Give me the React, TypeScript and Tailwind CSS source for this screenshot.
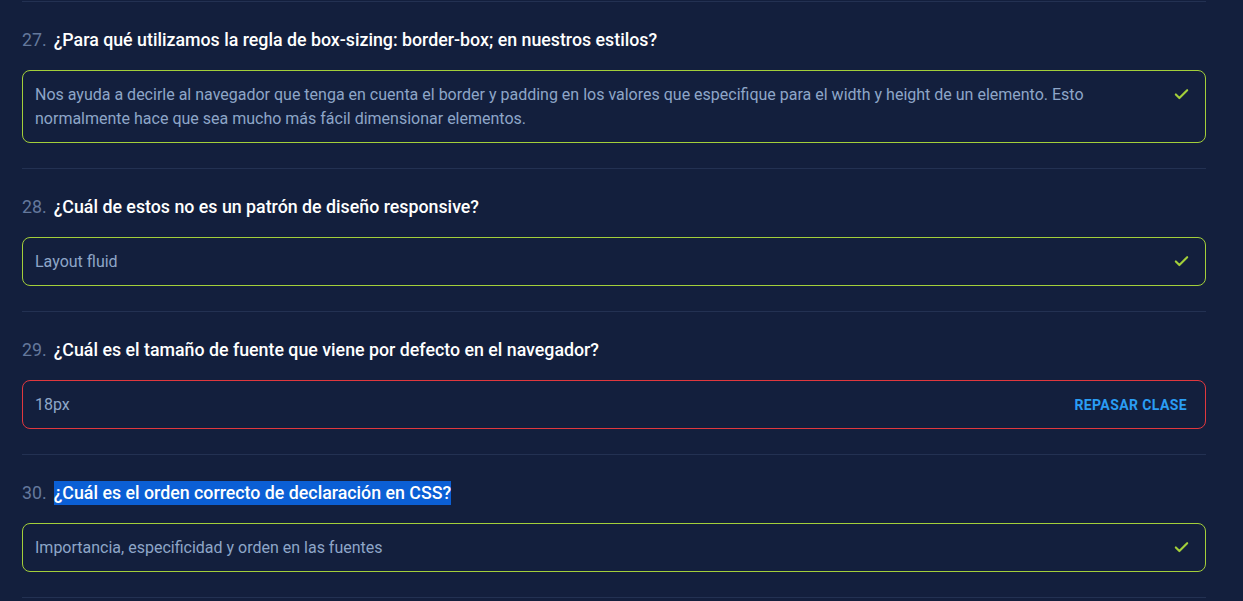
import { Check } from "lucide-react";

type Item = {
  n: number;
  q: string;
  a: string;
  ok: boolean;
  selected?: boolean;
};

const items: Item[] = [
  {
    n: 27,
    q: "¿Para qué utilizamos la regla de box-sizing: border-box; en nuestros estilos?",
    a: "Nos ayuda a decirle al navegador que tenga en cuenta el border y padding en los valores que especifique para el width y height de un elemento. Esto normalmente hace que sea mucho más fácil dimensionar elementos.",
    ok: true,
  },
  {
    n: 28,
    q: "¿Cuál de estos no es un patrón de diseño responsive?",
    a: "Layout fluid",
    ok: true,
  },
  {
    n: 29,
    q: "¿Cuál es el tamaño de fuente que viene por defecto en el navegador?",
    a: "18px",
    ok: false,
  },
  {
    n: 30,
    q: "¿Cuál es el orden correcto de declaración en CSS?",
    a: "Importancia, especificidad y orden en las fuentes",
    ok: true,
    selected: true,
  },
];

const App = () => {
  return (
    <div className="min-h-[601px] bg-[#131f3d] pt-px font-['Roboto',sans-serif]">
      <div className="w-[1184px] ml-[22px]">
        {items.map((item) => (
          <div key={item.n} className="border-t border-[#233152] pt-[26px] pb-[25px]">
            <div className="flex items-center h-6 text-[17.8px] leading-6">
              <span className="text-[#64789c] mr-[7px]">{item.n}.</span>
              <span
                className={
                  item.selected
                    ? "font-medium text-white bg-[#0b5fd5]"
                    : "font-medium text-white"
                }
              >
                {item.q}
              </span>
            </div>
            <div
              className={
                item.ok
                  ? "mt-[18px] flex items-start justify-between rounded-lg border border-[#a3cf3a] pl-3 pr-[15px] pt-3 pb-[11px]"
                  : "mt-[18px] flex items-start justify-between rounded-lg border border-[#e0383e] pl-3 pr-[18px] pt-3 pb-[11px]"
              }
            >
              <p className="text-[16px] leading-6 text-[#8ea6c8] max-w-[1100px]">
                {item.a}
              </p>
              {item.ok ? (
                <Check className="mt-[3px] shrink-0 text-[#a3cf3a]" size={17} strokeWidth={3} />
              ) : (
                <span className="text-[14px] leading-6 font-bold tracking-[0.4px] text-[#2a9df4]">
                  REPASAR CLASE
                </span>
              )}
            </div>
          </div>
        ))}
        <div className="border-t border-[#233152]"></div>
      </div>
    </div>
  );
};

export default App;
